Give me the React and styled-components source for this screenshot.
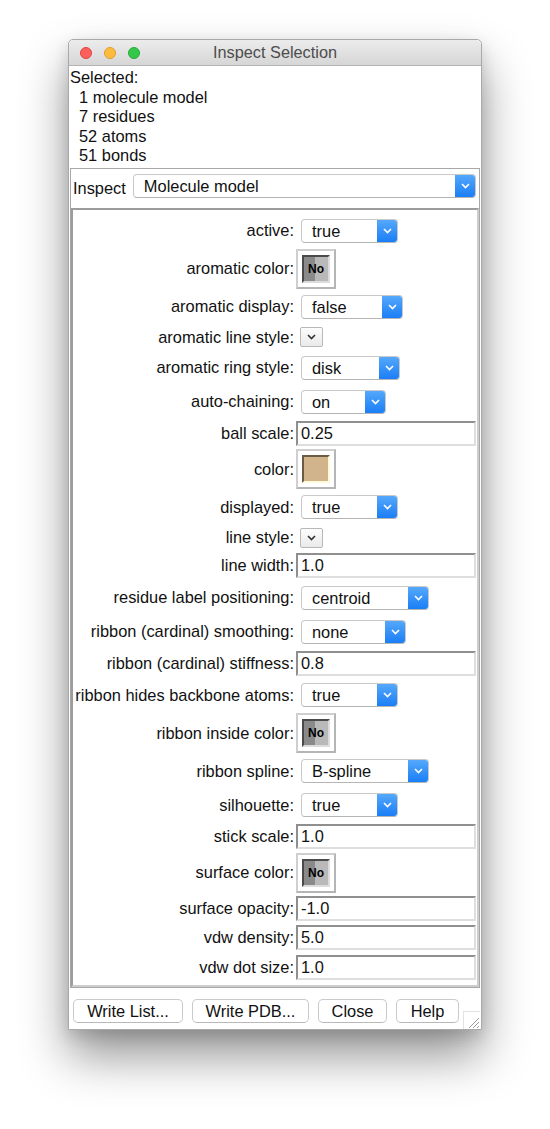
import React from 'react';
import styled, { createGlobalStyle } from 'styled-components';

const GlobalStyle = createGlobalStyle`
  html, body {
    margin: 0;
    padding: 0;
    background: #ffffff;
  }
  body {
    font-family: "Liberation Sans", Helvetica, Arial, sans-serif;
    font-size: 16.4px;
    color: #111;
  }
`;

const rows = [
  { label: 'active', kind: 'popup', value: 'true', width: 97 },
  { label: 'aromatic color', kind: 'color', value: 'none' },
  { label: 'aromatic display', kind: 'popup', value: 'false', width: 102 },
  { label: 'aromatic line style', kind: 'menu' },
  { label: 'aromatic ring style', kind: 'popup', value: 'disk', width: 99 },
  { label: 'auto-chaining', kind: 'popup', value: 'on', width: 85 },
  { label: 'ball scale', kind: 'entry', value: '0.25' },
  { label: 'color', kind: 'color', value: '#d2b48c' },
  { label: 'displayed', kind: 'popup', value: 'true', width: 97 },
  { label: 'line style', kind: 'menu' },
  { label: 'line width', kind: 'entry', value: '1.0' },
  { label: 'residue label positioning', kind: 'popup', value: 'centroid', width: 128 },
  { label: 'ribbon (cardinal) smoothing', kind: 'popup', value: 'none', width: 105 },
  { label: 'ribbon (cardinal) stiffness', kind: 'entry', value: '0.8' },
  { label: 'ribbon hides backbone atoms', kind: 'popup', value: 'true', width: 97 },
  { label: 'ribbon inside color', kind: 'color', value: 'none' },
  { label: 'ribbon spline', kind: 'popup', value: 'B-spline', width: 128 },
  { label: 'silhouette', kind: 'popup', value: 'true', width: 97 },
  { label: 'stick scale', kind: 'entry', value: '1.0' },
  { label: 'surface color', kind: 'color', value: 'none' },
  { label: 'surface opacity', kind: 'entry', value: '-1.0' },
  { label: 'vdw density', kind: 'entry', value: '5.0' },
  { label: 'vdw dot size', kind: 'entry', value: '1.0' },
];

const rowHeights = { popup: 34, color: 42, menu: 27, entry: 29.5 };

const Page = styled.div`
  padding: 39px 0 98px 68px;
`;

const Window = styled.div`
  width: 414px;
  box-sizing: border-box;
  border: 1px solid #a9a9a9;
  border-radius: 5px 5px 0 0;
  background: #fff;
  box-shadow: 0 26px 48px rgba(0, 0, 0, 0.42), 0 6px 16px rgba(0, 0, 0, 0.14);
`;

const TitleBar = styled.div`
  height: 25px;
  display: flex;
  align-items: center;
  padding-left: 11px;
  border-bottom: 1px solid #b4b4b4;
  border-radius: 5px 5px 0 0;
  background: linear-gradient(#ececec, #d6d6d6);
`;

const Lights = styled.div`
  display: flex;
  gap: 12px;
`;

const Light = styled.span`
  width: 12px;
  height: 12px;
  box-sizing: border-box;
  border-radius: 50%;
  background: ${p => p.$fill};
  border: 1px solid ${p => p.$edge};
`;

const Title = styled.div`
  flex: 1;
  text-align: center;
  margin-right: 71px;
  font-size: 16.3px;
  color: #4d4d4d;
`;

const Selected = styled.div`
  padding: 2px 0 2px 1px;
  line-height: 19.5px;
`;

const SubLine = styled.div`
  padding-left: ${p => (p.$indent ? 9 : 0)}px;
`;

const Frame = styled.div`
  margin: 0 1px;
  border: 1px solid #a8a8a8;
`;

const InspectRow = styled.div`
  height: 39px;
  box-sizing: border-box;
  display: flex;
  align-items: flex-start;
  padding: 5px 3px 0 2px;
  gap: 7px;
`;

const InspectLabel = styled.span`
  line-height: 26px;
  padding-top: 1px;
`;

const Panel = styled.div`
  border-style: solid;
  border-width: 2px;
  border-color: #9c9c9c #cdcdcd #cdcdcd #9c9c9c;
  padding: 4px 0 3px;
`;

const Row = styled.div`
  display: grid;
  grid-template-columns: 222px 1fr;
  align-items: center;
  height: ${p => p.$h}px;
`;

const Label = styled.div`
  text-align: right;
  white-space: nowrap;
  padding-right: 1px;
`;

const Control = styled.div`
  display: flex;
  align-items: center;
  padding-left: ${p => p.$pad}px;
`;

const Popup = styled.div`
  display: flex;
  width: ${p => p.$w}px;
  flex: ${p => (p.$grow ? 1 : 'none')};
  height: 24px;
  box-sizing: border-box;
  border: 1px solid #c9c9c9;
  border-bottom-color: #b5b5b5;
  border-radius: 4px;
  background: #fff;
  overflow: hidden;
`;

const PopupText = styled.span`
  flex: 1;
  padding-left: 10px;
  line-height: 22px;
  white-space: nowrap;
`;

const PopupArrow = styled.span`
  width: 20px;
  display: flex;
  align-items: center;
  justify-content: center;
  background: linear-gradient(#55a8fb, #1a7ef6);
`;

const Well = styled.div`
  width: 40px;
  height: 40px;
  box-sizing: border-box;
  border: 2px solid;
  border-color: #cfcfcf #b5b5b5 #b5b5b5 #cfcfcf;
  background: #fff;
  display: flex;
  align-items: center;
  justify-content: center;
`;

const Swatch = styled.div`
  width: 28px;
  height: 28px;
  box-sizing: border-box;
  border-style: solid;
  border-width: 2px;
  border-color: ${p => (p.$none ? '#4a4a4a #dcdcdc #dcdcdc #4a4a4a' : '#6b5a44 #fffbd8 #fffbd8 #6b5a44')};
  background: ${p =>
    p.$none
      ? 'linear-gradient(90deg, #8a8a8a 0 45%, #b9b9b9 45% 100%)'
      : p.$color};
  display: flex;
  align-items: center;
  justify-content: center;
  font-size: 12px;
  font-weight: bold;
  color: #000;
`;

const SmallMenu = styled.div`
  width: 23px;
  height: 20px;
  box-sizing: border-box;
  border: 1px solid #b8b8b8;
  border-radius: 2px;
  background: linear-gradient(#fdfdfd, #eaeaea);
  display: flex;
  align-items: center;
  justify-content: center;
`;

const Entry = styled.div`
  flex: 1;
  height: 25px;
  box-sizing: border-box;
  margin-right: 1px;
  border-style: solid;
  border-width: 2px;
  border-color: #8f8f8f #dedede #dedede #8f8f8f;
  padding-left: 3px;
  line-height: 21px;
`;

const ButtonBar = styled.div`
  height: 41px;
  display: flex;
  align-items: flex-start;
  padding: 11px 0 0 4px;
  box-sizing: border-box;
  gap: 9px;
`;

const Button = styled.div`
  flex: none;
  width: ${p => p.$w}px;
  height: 24px;
  box-sizing: border-box;
  border: 1px solid #cacaca;
  border-bottom-color: #b9b9b9;
  border-radius: 5px;
  background: #fff;
  text-align: center;
  line-height: 22px;
`;

const Grip = styled.div`
  flex: none;
  margin-left: -5px;
  align-self: flex-end;
  width: 17px;
  height: 18px;
  box-sizing: border-box;
  border-left: 1px solid #e2e2e2;
  border-top: 1px solid #e2e2e2;
  display: flex;
  align-items: flex-end;
  justify-content: flex-end;
`;

function Chevron({ color = '#fff' }) {
  return (
    <svg width="9" height="6" viewBox="0 0 9 6">
      <path d="M1 1 L4.5 4.5 L8 1" fill="none" stroke={color} strokeWidth="1.6" />
    </svg>
  );
}

function PopupButton({ value, width, grow }) {
  return (
    <Popup $w={width} $grow={grow}>
      <PopupText>{value}</PopupText>
      <PopupArrow>
        <Chevron />
      </PopupArrow>
    </Popup>
  );
}

function ColorWell({ value }) {
  const none = value === 'none';
  return (
    <Well>
      <Swatch $none={none} $color={value}>{none ? 'No' : null}</Swatch>
    </Well>
  );
}

function renderControl(r) {
  if (r.kind === 'popup') {
    return (
      <Control $pad={6}>
        <PopupButton value={r.value} width={r.width} />
      </Control>
    );
  }
  if (r.kind === 'color') {
    return (
      <Control $pad={1}>
        <ColorWell value={r.value} />
      </Control>
    );
  }
  if (r.kind === 'menu') {
    return (
      <Control $pad={5}>
        <SmallMenu>
          <Chevron color="#333" />
        </SmallMenu>
      </Control>
    );
  }
  return (
    <Control $pad={1}>
      <Entry>{r.value}</Entry>
    </Control>
  );
}

export default function App() {
  return (
    <Page>
      <GlobalStyle />
      <Window>
        <TitleBar>
          <Lights>
            <Light $fill="#fc605c" $edge="#e0443e" />
            <Light $fill="#fdbc40" $edge="#dea123" />
            <Light $fill="#34c84a" $edge="#27aa35" />
          </Lights>
          <Title>Inspect Selection</Title>
        </TitleBar>

        <Selected>
          <SubLine>Selected:</SubLine>
          <SubLine $indent>1 molecule model</SubLine>
          <SubLine $indent>7 residues</SubLine>
          <SubLine $indent>52 atoms</SubLine>
          <SubLine $indent>51 bonds</SubLine>
        </Selected>

        <Frame>
          <InspectRow>
            <InspectLabel>Inspect</InspectLabel>
            <PopupButton value="Molecule model" grow />
          </InspectRow>
          <Panel>
            {rows.map(r => (
              <Row key={r.label} $h={rowHeights[r.kind]}>
                <Label>{r.label}:</Label>
                {renderControl(r)}
              </Row>
            ))}
          </Panel>
        </Frame>

        <ButtonBar>
          <Button $w={110}>Write List...</Button>
          <Button $w={117}>Write PDB...</Button>
          <Button $w={69}>Close</Button>
          <Button $w={63}>Help</Button>
          <Grip>
            <svg width="14" height="14" viewBox="0 0 14 14">
              <path d="M13 3 L3 13 M13 7 L7 13 M13 11 L11 13" stroke="#9a9a9a" strokeWidth="1" />
            </svg>
          </Grip>
        </ButtonBar>
      </Window>
    </Page>
  );
}
